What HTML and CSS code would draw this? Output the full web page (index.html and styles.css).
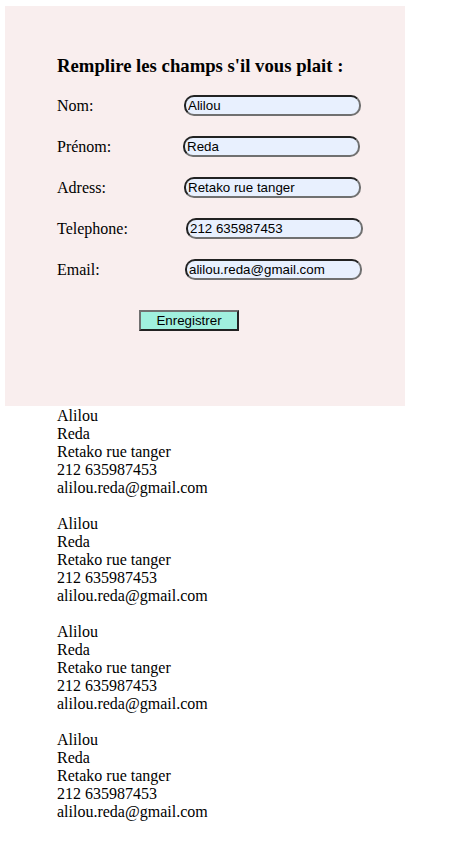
FILE: index.html
```html
<!DOCTYPE html>
<html lang="fr">
<head>
<meta charset="utf-8">
<title>Formulaire</title>
<link rel="stylesheet" href="styles.css">
</head>
<body>
<div class="card">
  <h3 class="title">Remplire les champs s'il vous plait :</h3>
  <form class="form">
    <div class="row"><label class="lbl">Nom:</label><input class="field" type="text" value="Alilou"></div>
    <div class="row"><label class="lbl">Prénom:</label><input class="field shift-m1" type="text" value="Reda"></div>
    <div class="row"><label class="lbl">Adress:</label><input class="field" type="text" value="Retako rue tanger"></div>
    <div class="row"><label class="lbl">Telephone:</label><input class="field shift-p2" type="text" value="212 635987453"></div>
    <div class="row"><label class="lbl">Email:</label><input class="field shift-p1" type="text" value="alilou.reda@gmail.com"></div>
    <div class="actions"><button class="btn" type="button">Enregistrer</button></div>
  </form>
</div>
<div class="list">
  <p class="entry">Alilou<br>Reda<br>Retako rue tanger<br>212 635987453<br>alilou.reda@gmail.com</p>
  <p class="entry">Alilou<br>Reda<br>Retako rue tanger<br>212 635987453<br>alilou.reda@gmail.com</p>
  <p class="entry">Alilou<br>Reda<br>Retako rue tanger<br>212 635987453<br>alilou.reda@gmail.com</p>
  <p class="entry">Alilou<br>Reda<br>Retako rue tanger<br>212 635987453<br>alilou.reda@gmail.com</p>
</div>
</body>
</html>
```

FILE: styles.css
```css
html, body {
  margin: 0;
  padding: 0;
  background: #ffffff;
}
body {
  font-family: "Liberation Serif", "Times New Roman", serif;
  font-size: 16px;
  line-height: 18px;
  color: #000;
  padding: 6px 0 0 5px;
}
.card {
  width: 400px;
  height: 400px;
  box-sizing: border-box;
  background: #f9eeee;
  padding: 49px 0 0 52px;
}
.title {
  margin: 0 0 18px 0;
  font-size: 18.72px;
  line-height: 22px;
  font-weight: bold;
}
.form {
  display: flex;
  flex-direction: column;
  gap: 20px;
}
.row {
  display: flex;
  align-items: center;
  height: 21px;
}
.lbl {
  width: 127px;
  flex: none;
}
.field {
  width: 177px;
  height: 21px;
  box-sizing: border-box;
  margin: 0;
  padding: 0 2px;
  font-family: "Liberation Sans", Arial, sans-serif;
  font-size: 13.33px;
  color: #000;
  background: #e8f0fe;
  border: 2px solid;
  border-color: #222 #707070 #707070 #222;
  border-radius: 10px;
  outline: none;
}
.shift-m1 { margin-left: -1px; }
.shift-p1 { margin-left: 1px; }
.shift-p2 { margin-left: 2px; }
.actions {
  padding: 0 0 0 82px;
  margin-top: 10px;
}
.btn {
  width: 100px;
  height: 21px;
  box-sizing: border-box;
  margin: 0;
  padding: 0;
  font-family: "Liberation Sans", Arial, sans-serif;
  font-size: 13.33px;
  color: #000;
  background: #a0f0de;
  border: 2px solid;
  border-color: #707070 #222 #222 #707070;
}
.list {
  padding: 1px 0 0 52px;
}
.entry {
  margin: 0 0 18px 0;
}
```
